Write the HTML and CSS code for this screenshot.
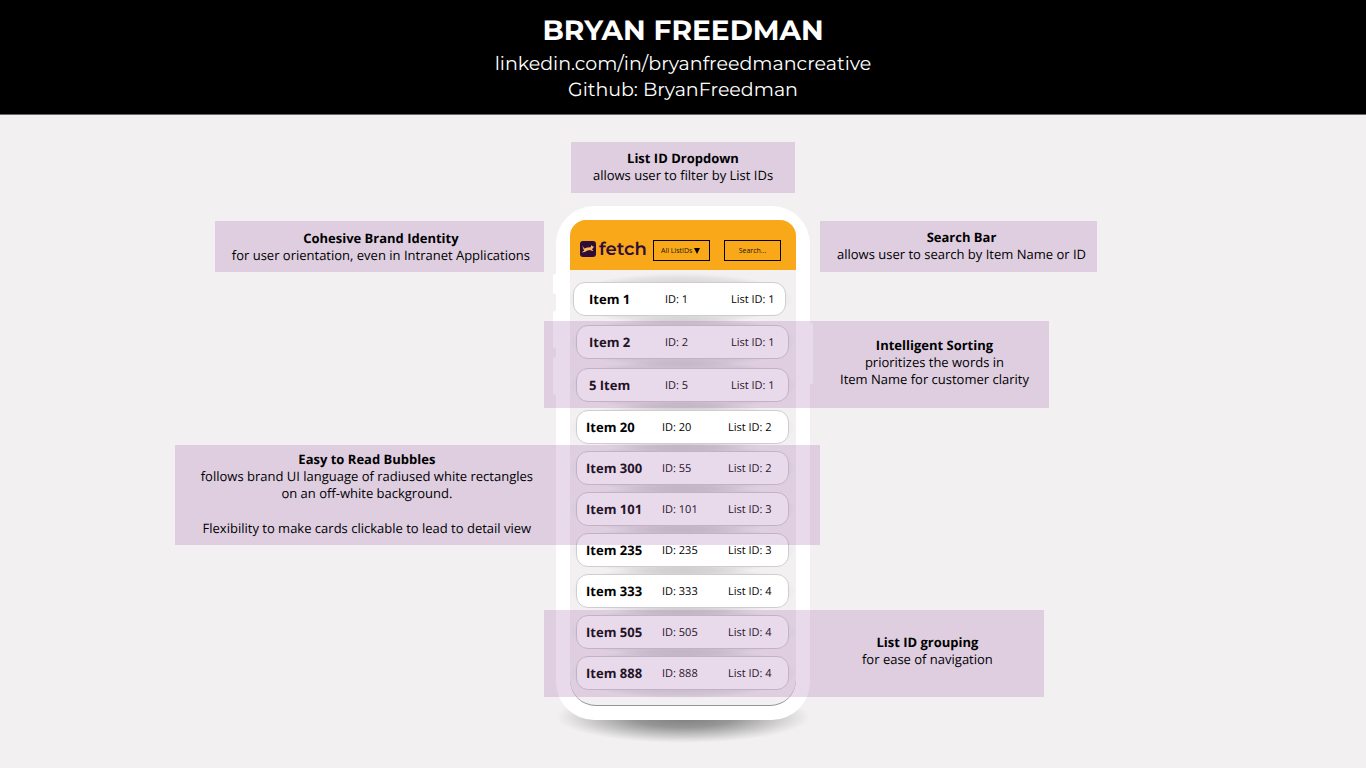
FILE: index.html
```html
<!DOCTYPE html>
<html lang="en">
<head>
<meta charset="utf-8">
<meta name="viewport" content="width=device-width, initial-scale=1">
<title>Bryan Freedman</title>
<link rel="stylesheet" href="styles.css">
</head>
<body>
<header class="banner">
  <h1 class="banner-title">BRYAN FREEDMAN</h1>
  <a class="banner-link" href="#linkedin">linkedin.com/in/bryanfreedmancreative</a>
  <a class="banner-link" href="#github">Github: BryanFreedman</a>
</header>
<main class="stage">
  <section class="note note-dropdown">
    <h2>List ID Dropdown</h2>
    <p>allows user to filter by List IDs</p>
  </section>
  <section class="note note-brand">
    <h2>Cohesive Brand Identity</h2>
    <p>for user orientation, even in Intranet Applications</p>
  </section>
  <section class="note note-search">
    <h2>Search Bar</h2>
    <p>allows user to search by Item Name or ID</p>
  </section>

  <div class="phone">
    <span class="key key-mute"></span>
    <span class="key key-up"></span>
    <span class="key key-down"></span>
    <span class="key key-power"></span>
    <div class="screen">
      <div class="appbar">
        <div class="logo">
          <svg class="logo-mark" viewBox="0 0 16 16" aria-hidden="true">
            <rect width="16" height="16" rx="3" fill="#300d38"/>
            <path d="M2.2 4.6 4.3 7.4l3-.8 3.3-.3 1-2.2.9 1.2 1.7.4-1.3 1.3-.8 1.6 1.3 1.3-1.3.1-1.8-1-3 .5-2 1.2-3.6.7 2.4-2-.9-2z" fill="#f9b95a"/>
          </svg>
          <span class="logo-text">fetch</span>
        </div>
        <div class="picker">
          <select class="field" aria-label="Filter by List ID"><option>All ListIDs</option><option>1</option><option>2</option><option>3</option><option>4</option></select>
          <svg class="picker-arrow" viewBox="0 0 6 6" aria-hidden="true"><path d="M0 0h6L3 6z"/></svg>
        </div>
        <input class="field field-search" type="text" placeholder="Search..." aria-label="Search">
      </div>
      <ul class="items">
        <li class="item item-short item-first"><b>Item 1</b><span>ID: 1</span><span>List ID: 1</span></li>
        <li class="item item-short"><b>Item 2</b><span>ID: 2</span><span>List ID: 1</span></li>
        <li class="item item-short"><b>5 Item</b><span>ID: 5</span><span>List ID: 1</span></li>
        <li class="item"><b>Item 20</b><span>ID: 20</span><span>List ID: 2</span></li>
        <li class="item"><b>Item 300</b><span>ID: 55</span><span>List ID: 2</span></li>
        <li class="item"><b>Item 101</b><span>ID: 101</span><span>List ID: 3</span></li>
        <li class="item"><b>Item 235</b><span>ID: 235</span><span>List ID: 3</span></li>
        <li class="item"><b>Item 333</b><span>ID: 333</span><span>List ID: 4</span></li>
        <li class="item"><b>Item 505</b><span>ID: 505</span><span>List ID: 4</span></li>
        <li class="item"><b>Item 888</b><span>ID: 888</span><span>List ID: 4</span></li>
      </ul>
    </div>
  </div>

  <section class="note note-sorting">
    <h2>Intelligent Sorting</h2>
    <p>prioritizes the words in<br>Item Name for customer clarity</p>
  </section>
  <section class="note note-bubbles">
    <h2>Easy to Read Bubbles</h2>
    <p>follows brand UI language of radiused white rectangles<br>on an off-white background.</p>
    <p class="note-extra">Flexibility to make cards clickable to lead to detail view</p>
  </section>
  <section class="note note-grouping">
    <h2>List ID grouping</h2>
    <p>for ease of navigation</p>
  </section>
</main>
</body>
</html>
```
FILE: styles.css
```css
* { box-sizing: border-box; }

body {
  margin: 0;
  min-height: 100vh;
  background: #f2f0f1;
  color: #000;
  font-family: "Open Sans", sans-serif;
  text-rendering: geometricPrecision;
}

h1, h2, p, ul { margin: 0; padding: 0; }

.banner {
  display: flex;
  flex-direction: column;
  align-items: center;
  padding: 13px 0 11px;
  border-bottom: 1px solid #6b696a;
  background: #000;
  color: #fff;
  font-family: Montserrat, Inter, sans-serif;
}

.banner-title {
  margin-bottom: 2px;
  font-size: 28px;
  font-weight: 700;
  line-height: 36px;
}

.banner-link {
  color: inherit;
  font-size: 19px;
  line-height: 26px;
  text-decoration: none;
}

/* Phone in the middle column, notes on the sides and over it */
.stage {
  display: grid;
  grid-template-columns: 1fr 12px 254px 10px 1fr;
  grid-template-rows: 51px 13px 15px 51px 49px 87px 37px 100px 65px 87px 23px;
  padding: 27px 2px 47px 0;
}

.note {
  z-index: 1;
  display: flex;
  flex-direction: column;
  justify-content: center;
  background: rgba(151, 85, 164, 0.22);
  font-size: 13px;
  line-height: 17px;
  text-align: center;
  white-space: nowrap;
}

.note h2 { font-size: inherit; font-weight: 700; }
.note-extra { margin-top: 18px; }

.note-dropdown { grid-area: 1 / 3; justify-self: center; padding: 0 22px 2px; }
.note-brand { grid-area: 4 / 1; justify-self: end; padding: 0 14px 0 17px; }
.note-search { grid-area: 4 / 5; justify-self: start; padding: 0 11px 1px 17px; }
.note-sorting { grid-area: 6 / 2 / 7 / 6; justify-self: start; padding: 0 20px 5px 296px; }
.note-bubbles { grid-area: 8 / 1 / 9 / 5; justify-self: end; padding: 0 287px 3px 26px; }
.note-grouping { grid-area: 10 / 2 / 11 / 6; justify-self: start; padding: 0 51px 5px 318px; }

.phone {
  grid-area: 3 / 3 / 12 / 4;
  position: relative;
  isolation: isolate;
  display: flex;
  padding: 14px;
}

/* Shadow on the floor */
.phone::before {
  content: "";
  position: absolute;
  z-index: -2;
  left: 0;
  right: 0;
  bottom: -23px;
  height: 52px;
  background: radial-gradient(closest-side, #7c7c7c, rgba(112, 112, 112, 0.7) 40%, rgba(112, 112, 112, 0.12) 88%, transparent);
}

/* Body of the phone */
.phone::after {
  content: "";
  position: absolute;
  z-index: -1;
  inset: 0;
  border-radius: 38px;
  background: #fff;
}

.key {
  position: absolute;
  left: -3px;
  width: 3px;
  border-radius: 2px 0 0 2px;
  background: #fff;
}
.key-mute { top: 68px; height: 20px; }
.key-up { top: 105px; height: 37px; }
.key-down { top: 151px; height: 38px; }
.key-power { top: 117px; left: auto; right: -3px; height: 61px; border-radius: 0 2px 2px 0; }

.screen {
  flex: 1;
  overflow: hidden;
  border-bottom: 1px solid #969495;
  border-radius: 16px 16px 26px 26px;
  background: #f2f0f1;
}

.appbar {
  display: flex;
  align-items: center;
  height: 50px;
  padding: 11px 15px 0 10px;
  background: #f9a81a;
}

.logo {
  display: flex;
  align-items: center;
  gap: 3px;
  width: 74px;
  padding-bottom: 4px;
  color: #300d38;
}
.logo-mark { width: 16px; height: 16px; }
.logo-text {
  font-family: Montserrat, Lato, sans-serif;
  font-size: 18px;
  font-weight: 600;
  line-height: 18px;
}

.field {
  display: block;
  width: 57px;
  height: 21px;
  margin: 0;
  padding: 0 7px;
  border: 1px solid #000;
  border-radius: 0;
  background: none;
  color: #1c1404;
  font-family: inherit;
  font-size: 7px;
  appearance: none;
}
.field-search { margin-left: 14px; text-align: center; }
.field-search::placeholder { color: #1c1404; opacity: 1; }

.picker { position: relative; }
.picker-arrow {
  position: absolute;
  top: 8px;
  right: 10px;
  width: 6px;
  height: 6px;
  pointer-events: none;
}

.items {
  isolation: isolate;
  display: flex;
  flex-direction: column;
  gap: 7px;
  padding: 12px 7px 14px 6px;
  list-style: none;
}

.item {
  position: relative;
  display: grid;
  grid-template-columns: 76px 66px 1fr;
  align-items: center;
  height: 34px;
  padding-left: 9px;
  border: 1px solid #cfcdce;
  border-radius: 12px;
  background: #fff;
  font-size: 11px;
  white-space: nowrap;
}
.item b { font-size: 13px; }
.item-short { padding-left: 12px; }
.item-short + .item { margin-top: 1px; }
.item-short + .item-short { margin-top: 2px; }
.item-first { margin: 0 3px 0 -3px; padding-left: 15px; }

/* Soft oval shadow behind a card */
.item::before {
  content: "";
  position: absolute;
  z-index: -1;
  inset: -10px -8px;
  background: radial-gradient(closest-side, rgba(0, 0, 0, 0.24), rgba(0, 0, 0, 0.06) 84%, transparent);
}
```
